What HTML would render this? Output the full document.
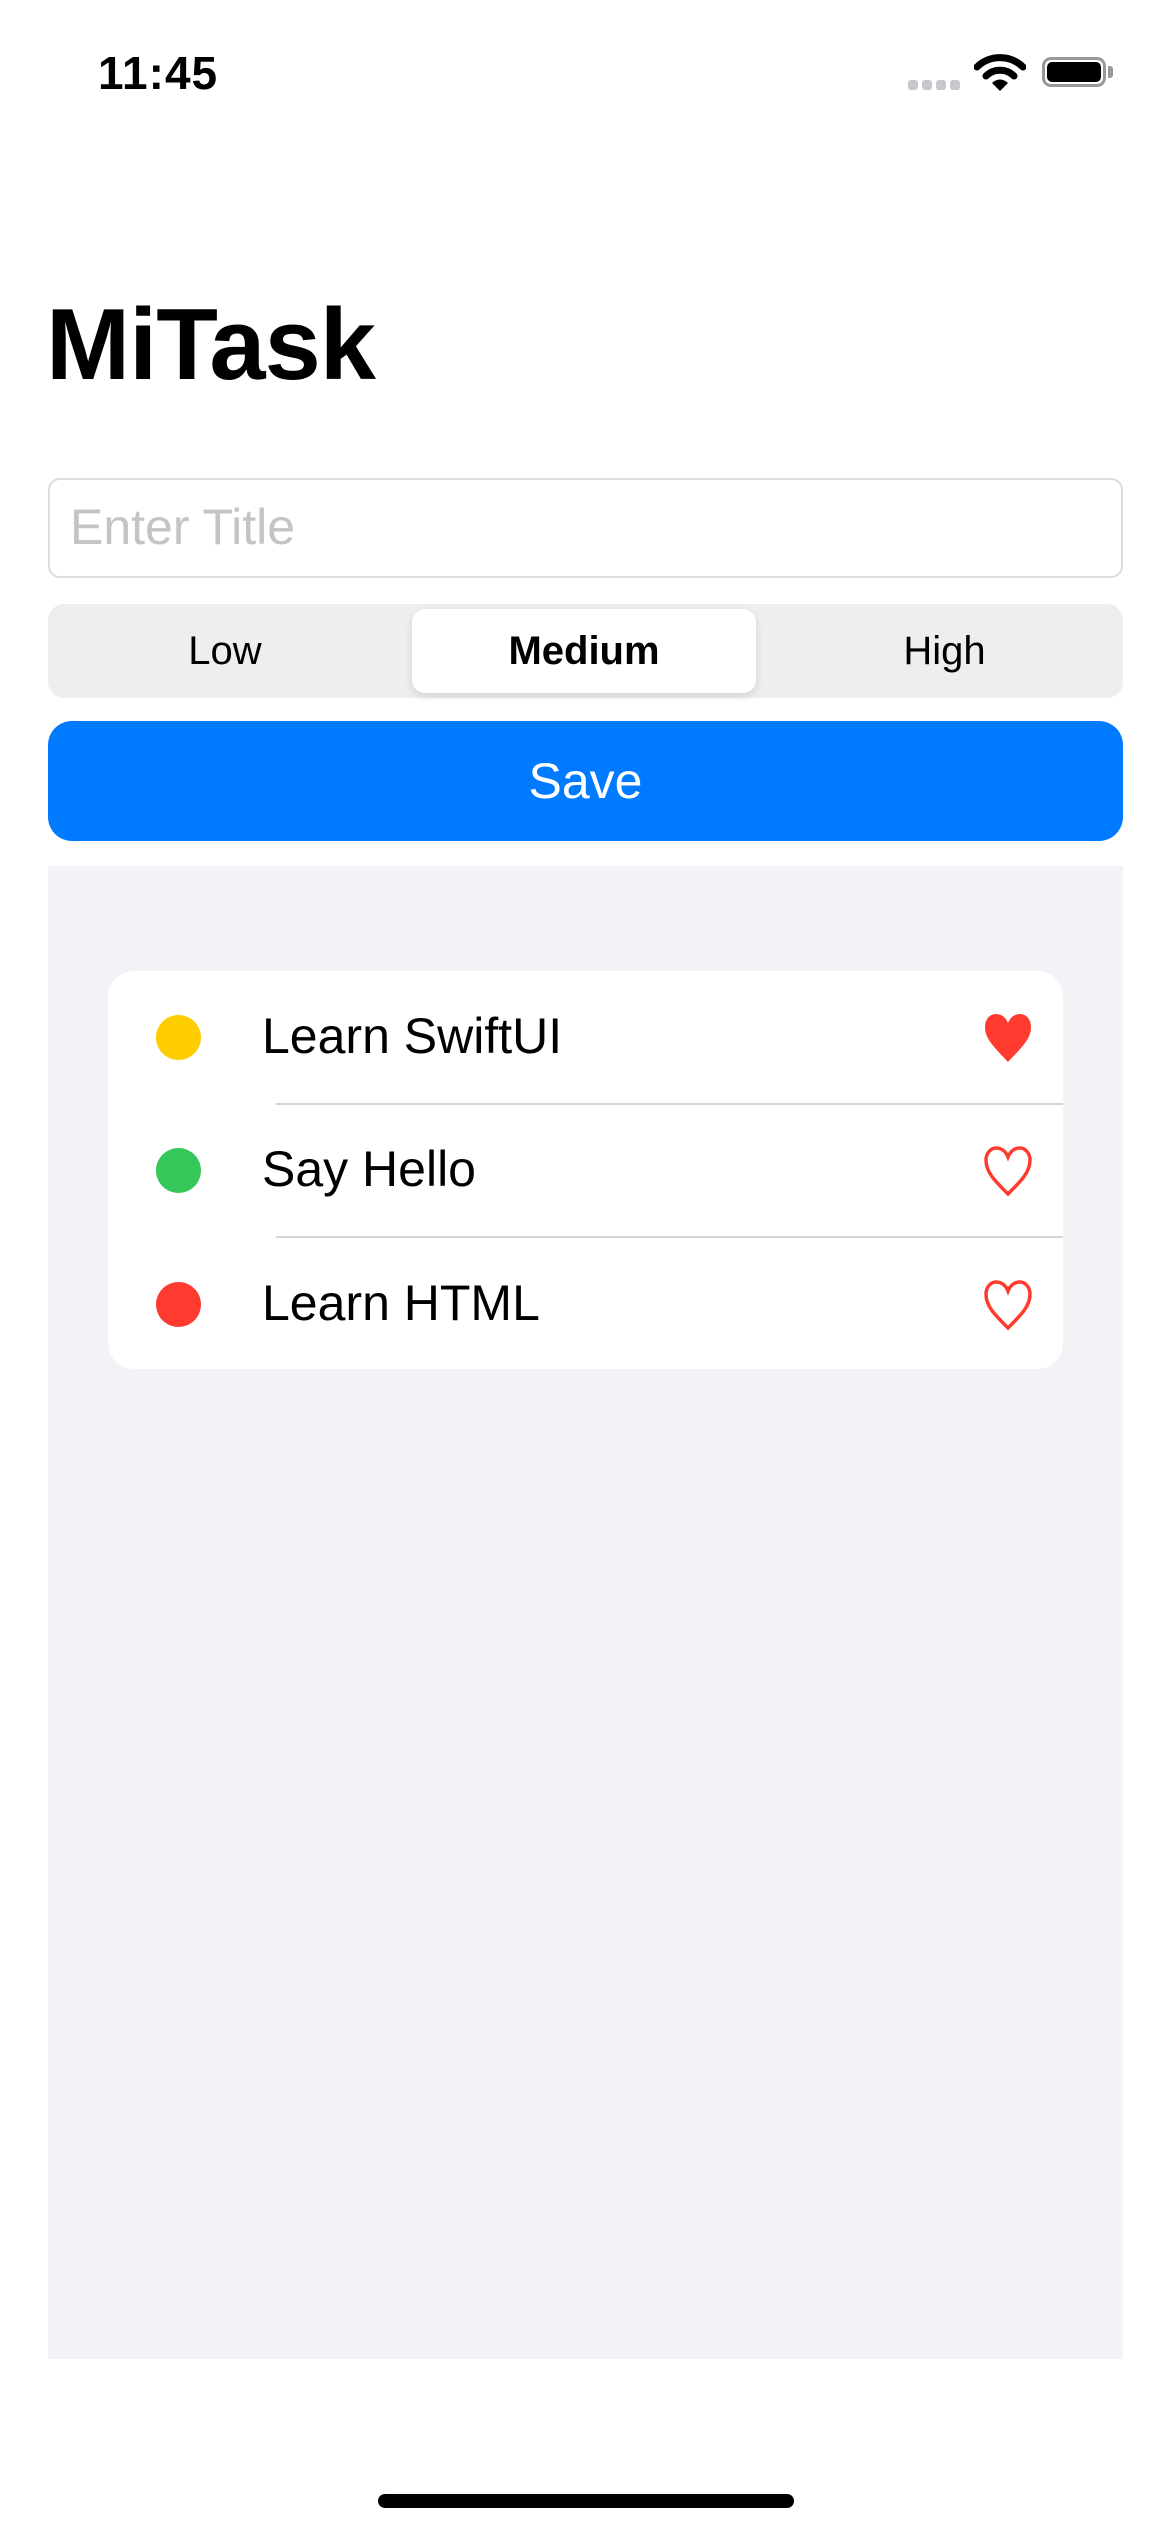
<!DOCTYPE html>
<html><head><meta charset="utf-8"><style>
body{margin:0;width:1170px;height:2532px;background:#fff;position:relative;overflow:hidden;font-family:"Liberation Sans",sans-serif}
.a{position:absolute}
</style></head><body>
<div class="a" style="left:98px;top:46px;font-size:46px;font-weight:bold;letter-spacing:1px">11:45</div>
<div class="a" style="left:908px;top:80px;display:flex;gap:4px">
<div style="width:10px;height:10px;border-radius:3px;background:#c7c7cc"></div><div style="width:10px;height:10px;border-radius:3px;background:#c7c7cc"></div><div style="width:10px;height:10px;border-radius:3px;background:#c7c7cc"></div><div style="width:10px;height:10px;border-radius:3px;background:#c7c7cc"></div></div>
<svg class="a" style="left:974px;top:54px" width="52" height="38" viewBox="0 0 52 38"><path d="M3 13 A33 33 0 0 1 49 13" stroke="#000" stroke-width="7" fill="none" stroke-linecap="round"/><path d="M12 22 A20 20 0 0 1 40 22" stroke="#000" stroke-width="7" fill="none" stroke-linecap="round"/><path d="M26 37 L18 29 A11 11 0 0 1 34 29 Z" fill="#000"/></svg>
<div class="a" style="left:1042px;top:57px;width:64px;height:30px;border:3px solid #999;border-radius:9px;box-sizing:border-box"></div>
<div class="a" style="left:1047px;top:62px;width:54px;height:20px;background:#000;border-radius:5px"></div>
<div class="a" style="left:1108px;top:66px;width:5px;height:12px;background:#999;border-radius:0 3px 3px 0"></div>
<div class="a" style="left:46px;top:288px;font-size:101px;font-weight:bold;letter-spacing:-1px">MiTask</div>
<div class="a" style="left:48px;top:478px;width:1075px;height:100px;border:2px solid #dcdcdc;border-radius:12px;box-sizing:border-box"></div>
<div class="a" style="left:70px;top:498px;font-size:50px;color:#c4c4c6">Enter Title</div>
<div class="a" style="left:48px;top:604px;width:1075px;height:94px;background:#eeeeef;border-radius:16px"></div>
<div class="a" style="left:412px;top:609px;width:344px;height:84px;background:#fff;border-radius:13px;box-shadow:0 3px 8px rgba(0,0,0,.12)"></div>
<div class="a" style="left:48px;top:604px;width:354px;height:94px;line-height:94px;text-align:center;font-size:40px">Low</div>
<div class="a" style="left:412px;top:604px;width:344px;height:94px;line-height:94px;text-align:center;font-size:40px;font-weight:bold">Medium</div>
<div class="a" style="left:766px;top:604px;width:357px;height:94px;line-height:94px;text-align:center;font-size:40px">High</div>
<div class="a" style="left:48px;top:721px;width:1075px;height:120px;background:#007aff;border-radius:24px;color:#fff;font-size:50px;line-height:120px;text-align:center">Save</div>
<div class="a" style="left:48px;top:866px;width:1075px;height:1493px;background:#f2f2f7"></div>
<div class="a" style="left:108px;top:971px;width:955px;height:398px;background:#fff;border-radius:26px"></div>
<div class="a" style="left:276px;top:1103px;width:787px;height:2px;background:#d6d6d8"></div>
<div class="a" style="left:276px;top:1236px;width:787px;height:2px;background:#d6d6d8"></div>
<div class="a" style="left:156px;top:1015px;width:45px;height:45px;border-radius:50%;background:#ffcc00"></div>
<div class="a" style="left:156px;top:1148px;width:45px;height:45px;border-radius:50%;background:#34c759"></div>
<div class="a" style="left:156px;top:1282px;width:45px;height:45px;border-radius:50%;background:#ff3b30"></div>
<div class="a" style="left:262px;top:1007px;font-size:50px">Learn SwiftUI</div>
<div class="a" style="left:262px;top:1140px;font-size:50px">Say Hello</div>
<div class="a" style="left:262px;top:1274px;font-size:50px">Learn HTML</div>
<svg class="a" style="left:983px;top:1012px" width="50" height="52" viewBox="0 0 50 52"><path d="M25 50 C11 35 2 27 2 15 C2 7 7 2 13 2 C19 2 23 6 25 11 C27 6 31 2 37 2 C43 2 48 7 48 15 C48 27 39 35 25 50Z" fill="#ff3b30"/></svg>
<svg class="a" style="left:983px;top:1145px" width="50" height="52" viewBox="0 0 50 52"><path d="M25 49 C11 35 3 27 3 15 C3 8 8 3 13 3 C19 3 23 7 25 12 C27 7 31 3 37 3 C42 3 47 8 47 15 C47 27 39 35 25 49Z" fill="none" stroke="#ff3b30" stroke-width="3.5"/></svg>
<svg class="a" style="left:983px;top:1279px" width="50" height="52" viewBox="0 0 50 52"><path d="M25 49 C11 35 3 27 3 15 C3 8 8 3 13 3 C19 3 23 7 25 12 C27 7 31 3 37 3 C42 3 47 8 47 15 C47 27 39 35 25 49Z" fill="none" stroke="#ff3b30" stroke-width="3.5"/></svg>
<div class="a" style="left:378px;top:2494px;width:416px;height:14px;border-radius:7px;background:#000"></div>
</body></html>
